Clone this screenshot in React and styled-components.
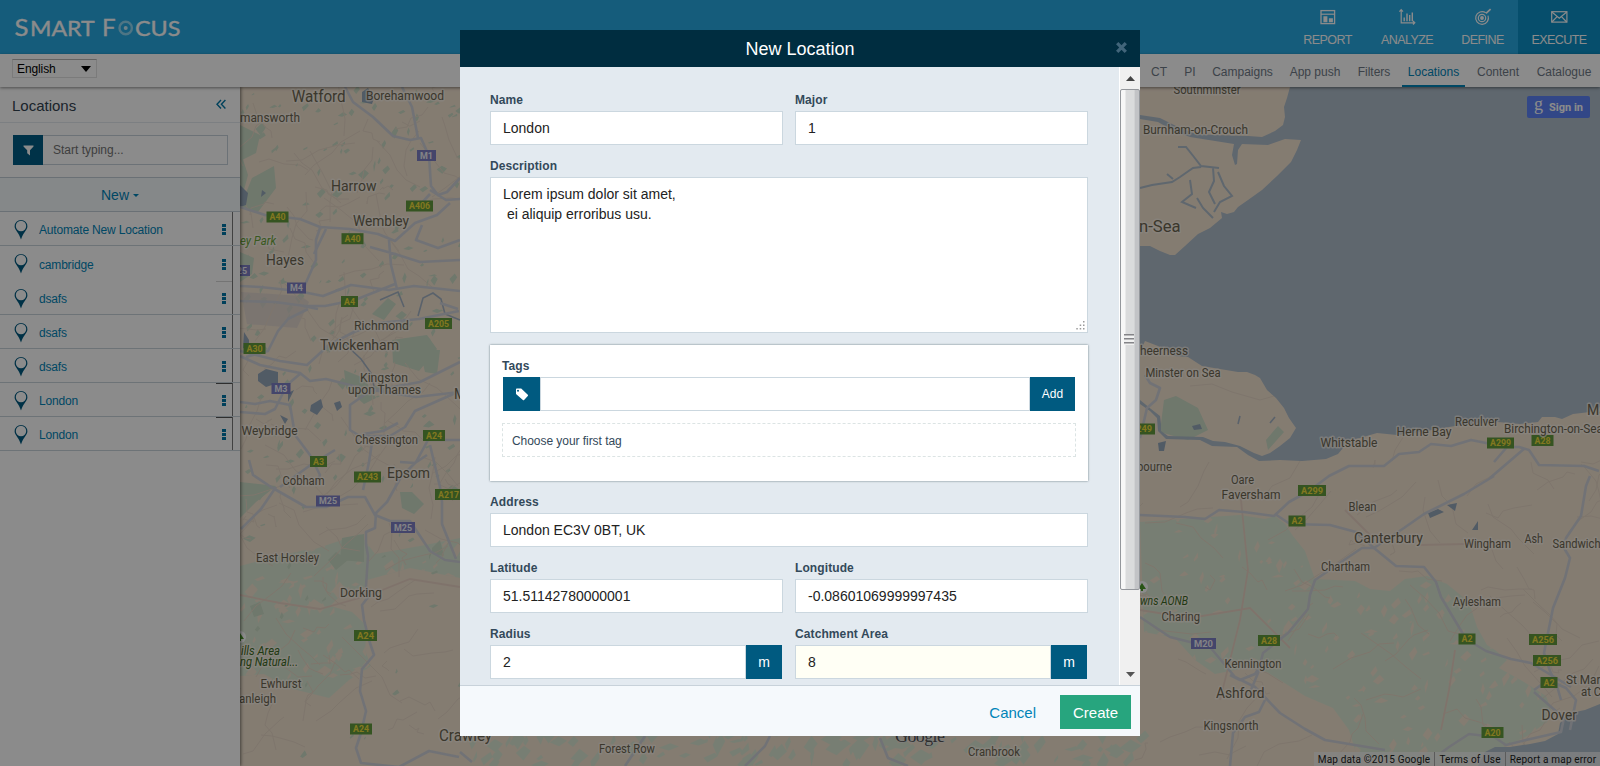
import React from "react";
import styled, { createGlobalStyle } from "styled-components";

const Global = createGlobalStyle`
  * { box-sizing: border-box; }
  html, body { margin: 0; padding: 0; overflow: hidden; }
  body { font-family: "Liberation Sans", Arial, sans-serif; font-size: 12px; color: #3b4a55; }
`;

const Page = styled.div`
  width: 1600px;
  height: 766px;
  display: flex;
  flex-direction: column;
  background: #fff;
  overflow: hidden;
`;

/* ---------- header ---------- */
const TopBar = styled.header`
  height: 54px;
  flex: none;
  display: flex;
  justify-content: space-between;
  background: #28a9e2;
`;
const Menu = styled.nav`
  display: flex;
`;
const MenuItem = styled.a`
  width: ${(p) => p.$w}px;
  display: flex;
  flex-direction: column;
  align-items: center;
  padding-top: 8px;
  background: ${(p) => (p.$active ? "#0b8fc6" : "transparent")};
  color: #fff;
  font-size: 12.5px;
  line-height: 16px;
  letter-spacing: -0.55px;
  svg { width: 20px; height: 18px; margin-bottom: 6px; }
`;
const SubBar = styled.div`
  height: 33px;
  flex: none;
  display: flex;
  justify-content: space-between;
  padding: 0 3px 0 12px;
  background: #fff;
  box-shadow: 0 1px 3px rgba(0, 0, 0, 0.45);
  position: relative;
  z-index: 2;
`;
const Language = styled.div`
  width: 85px;
  height: 19px;
  margin-top: 5px;
  padding: 0 5px 0 4px;
  display: flex;
  align-items: center;
  justify-content: space-between;
  border: 1px solid #e2e2e2;
  border-top: 1px solid #b4b4b4;
  color: #000;
  letter-spacing: -0.1px;
`;
const SubNav = styled.nav`
  display: flex;
  gap: 6px;
`;
const SubItem = styled.a`
  width: ${(p) => p.$w}px;
  text-align: center;
  line-height: 36px;
  white-space: nowrap;
  height: 33px;
  color: ${(p) => (p.$active ? "#0084b8" : "#6f7a86")};
  border-bottom: ${(p) => (p.$active ? "2px solid #0084b8" : "none")};
`;

/* ---------- sidebar ---------- */
const Main = styled.div`
  flex: 1;
  display: flex;
  min-height: 0;
`;
const Sidebar = styled.aside`
  width: 240px;
  flex: none;
  background: #fff;
  box-shadow: 1px 0 3px rgba(0, 0, 0, 0.5);
  position: relative;
  z-index: 1;
`;
const SideHead = styled.div`
  height: 36px;
  padding: 1px 14px 0 12px;
  display: flex;
  align-items: center;
  justify-content: space-between;
  border-bottom: 1px solid #e3e9ee;
  font-size: 15px;
  color: #33424f;
  svg { margin-top: -2px; }
`;
const SearchRow = styled.div`
  height: 55px;
  padding: 12px 12px 0 13px;
  display: flex;
  border-bottom: 1px solid #c3ced6;
`;
const SearchIcon = styled.div`
  width: 30px;
  height: 30px;
  display: flex;
  align-items: center;
  justify-content: center;
  background: #005c84;
`;
const SearchBox = styled.div`
  flex: 1;
  height: 30px;
  padding-left: 10px;
  line-height: 28px;
  border: 1px solid #c6d2da;
  border-left: 0;
  color: #737373;
`;
const NewRow = styled.div`
  height: 34px;
  display: flex;
  gap: 4px;
  align-items: center;
  justify-content: center;
  border-bottom: 1px solid #c3ced6;
  background: #f5f9fc;
  font-size: 14px;
  color: #0084b8;
  svg { margin-top: 2px; }
`;
const List = styled.div`
  width: 100%;
  background: linear-gradient(#777, #777) 232px 0 / 1px 100% no-repeat;
`;
const Item = styled.div`
  height: ${(p) => (p.$plain ? 35 : 34)}px;
  display: flex;
  align-items: center;
  padding: 2px 14px 0 14px;
  border-bottom: 1px solid ${(p) => (p.$plain ? "transparent" : "#c9d4db")};
  background: linear-gradient(${(p) => p.$tick || "transparent"}, ${(p) => p.$tick || "transparent"}) 216px 0 / 16px 1px
    no-repeat;
  color: #0084b8;
`;
const ItemName = styled.span`
  flex: 1;
  padding: 1px 0 0 11px;
  letter-spacing: -0.18px;
`;
const Dots = styled.i`
  width: 4px;
  height: 11px;
  background: repeating-linear-gradient(#0076a8 0 3px, transparent 3px 4px);
`;

/* ---------- map ---------- */
const MapArea = styled.div`
  flex: 1;
  position: relative;
  overflow: hidden;
`;
const MapSvg = styled.svg`
  display: block;
  font-family: Roboto, sans-serif;
`;
const SignIn = styled.div`
  position: absolute;
  right: 10px;
  top: 9px;
  width: 63px;
  height: 22px;
  display: flex;
  align-items: center;
  justify-content: center;
  gap: 6px;
  border-radius: 2px;
  background: #5c83f7;
  color: #fff;
  font: 700 11px Roboto, sans-serif;
`;
const SignInMark = styled.span`
  font: 18px/14px "Liberation Serif", serif;
  margin-top: -6px;
`;
const Credits = styled.div`
  position: absolute;
  right: 0;
  bottom: 0;
  height: 14px;
  display: flex;
  background: rgba(245, 245, 245, 0.72);
  font: 10px/15px Roboto, sans-serif;
  letter-spacing: 0.17px;
  color: #222;
  white-space: nowrap;
`;
const Credit = styled.span`
  width: ${(p) => p.$w}px;
  text-align: center;
  border-left: ${(p) => (p.$line ? "1px solid #a8a8a8" : "0")};
`;

/* ---------- modal ---------- */
const Backdrop = styled.div`
  position: fixed;
  inset: 0;
  z-index: 10;
  display: flex;
  justify-content: center;
  align-items: flex-start;
  padding-top: 30px;
  background: rgba(0, 0, 0, 0.455);
`;
const Modal = styled.section`
  width: 680px;
  height: 706px;
  display: flex;
  flex-direction: column;
  background: #e3eaf0;
`;
const ModalHead = styled.div`
  height: 37px;
  flex: none;
  display: grid;
  grid-template-columns: 1fr auto 1fr;
  align-items: center;
  padding-right: 13px;
  padding-left: 13px;
  background: #002d40;
  color: #fff;
`;
const ModalTitle = styled.h1`
  grid-column: 2;
  margin: 0;
  font-size: 18px;
  font-weight: 400;
  line-height: 38px;
`;
const CloseSlot = styled.span`
  justify-self: end;
  height: 11px;
  margin-top: -3px;
  display: flex;
`;
const ModalBody = styled.div`
  flex: 1;
  min-height: 0;
  display: flex;
`;
const Form = styled.div`
  flex: 1;
  padding: 24px 31px 0 30px;
  display: flex;
  flex-direction: column;
  gap: 12px;
  overflow: hidden;
`;
const Columns = styled.div`
  display: grid;
  grid-template-columns: 1fr 1fr;
  gap: 12px;
`;
const Field = styled.div`
  display: flex;
  flex-direction: column;
`;
const Label = styled.label`
  height: 20px;
  line-height: ${(p) => p.$lh || 18}px;
  font-weight: 700;
  color: #33495a;
  letter-spacing: 0.1px;
`;
const Box = styled.div`
  flex: ${(p) => (p.$h ? "none" : "1 1 auto")};
  height: ${(p) => p.$h || 34}px;
  min-height: 34px;
  padding: ${(p) => (p.$h ? "6px 12px" : "0 12px")};
  line-height: ${(p) => (p.$h ? 20 : 32)}px;
  border: 1px solid #cbd7df;
  background: ${(p) => p.$bg || "#fff"};
  color: #222;
  font-size: 14px;
  white-space: pre;
  position: relative;
`;
const Grip = styled.svg`
  position: absolute;
  right: 2px;
  bottom: 2px;
`;
const Group = styled.div`
  display: flex;
  padding-right: ${(p) => p.$inset || 0}px;
`;
const Addon = styled.div`
  width: ${(p) => p.$w}px;
  height: 34px;
  flex: none;
  display: flex;
  align-items: center;
  justify-content: center;
  background: #005a80;
  color: #fff;
  font-size: ${(p) => p.$size || 14}px;
`;
const TagCard = styled.div`
  height: 136px;
  flex: none;
  padding: 12px 12px 0 12px;
  background: #fff;
  box-shadow: 0 0 2px rgba(60, 80, 90, 0.75);
`;
const TagRow = styled.div`
  display: flex;
  margin: 0 1px;
`;
const TagHint = styled.div`
  height: 34px;
  margin-top: 12px;
  padding-left: 9px;
  line-height: 34px;
  border: 1px dashed #dce4e4;
  color: #33495a;
  letter-spacing: -0.05px;
`;
const Scroll = styled.div`
  width: 21px;
  flex: none;
  display: flex;
  flex-direction: column;
  align-items: center;
  border-left: 1px solid #fff;
  background: #f0f0f0;
`;
const Arrow = styled.div`
  height: 22px;
  flex: none;
  display: flex;
  align-items: center;
`;
const Thumb = styled.div`
  width: 20px;
  height: 501px;
  flex: none;
  display: flex;
  align-items: center;
  justify-content: center;
  border: 1px solid #94979c;
  border-radius: 2px;
  background: linear-gradient(90deg, #f7f7f7 0 20%, #dadbdc 30% 72%, #c2c3c6 80% 100%);
`;
const ThumbLines = styled.i`
  width: 10px;
  height: 11px;
  margin-right: 2px;
  background: repeating-linear-gradient(#848488 0 1px, #b9b9bb 1px 2px, #f0f0f0 2px 4px);
`;
const ScrollRest = styled.div`
  flex: 1;
`;
const ModalFoot = styled.div`
  height: 51px;
  flex: none;
  display: flex;
  align-items: flex-start;
  justify-content: flex-end;
  gap: 24px;
  padding: 9px 9px 0 0;
  border-top: 1px solid #c8d2da;
  background: #f5f9fc;
  font-size: 15px;
  line-height: 35px;
`;
const Cancel = styled.a`
  color: #0084b8;
`;
const Create = styled.div`
  width: 71px;
  height: 34px;
  text-align: center;
  background: #27a57e;
  color: #fff;
`;

/* ---------- icons ---------- */
const Logo = () => (
  <svg width="200" height="54" fontFamily="Lato, sans-serif" fill="#fff" stroke="#fff" strokeWidth=".35">
    <text x="14.5" y="35.5" fontSize="23.5" textLength="14" lengthAdjust="spacingAndGlyphs">S</text>
    <text x="30" y="35.5" fontSize="21" textLength="64.5" lengthAdjust="spacingAndGlyphs">MART</text>
    <text x="102" y="35.5" fontSize="24">F</text>
    <text x="135" y="35.5" fontSize="21" textLength="45.5" lengthAdjust="spacingAndGlyphs">CUS</text>
    <circle cx="125.7" cy="28" r="6.2" fill="none" stroke="#8fd6f2" strokeWidth="2.4" />
    <circle cx="125.7" cy="28" r="2" fill="#c9ecf9" stroke="none" />
  </svg>
);
const ReportIcon = () => (
  <svg viewBox="0 0 20 18" fill="none" stroke="#fff" strokeWidth="1.3">
    <rect x="3" y="2.6" width="13.6" height="13" />
    <path d="M3 6.2h13.6" strokeWidth="1.2" />
    <path d="M5.4 8.2h4v6h-4zM10.9 10.3h4v3.9h-4z" fill="#fff" stroke="none" />
  </svg>
);
const AnalyzeIcon = () => (
  <svg viewBox="0 0 20 18" fill="none" stroke="#fff" strokeWidth="1.2">
    <path d="M4.2 1.5v13.3h13.5M2.4 3.6l1.8-2 1.8 2M16 13l1.8 1.8L16 16.5" />
    <path d="M7.2 13.2V9.5M10 13.2V5.5M12.7 13.2V7M15.3 13.2V4.5" strokeWidth="1.4" />
  </svg>
);
const DefineIcon = () => (
  <svg viewBox="0 0 20 18" fill="none" stroke="#fff" strokeWidth="1.2">
    <path d="M12.8 4.8A6.4 6.4 0 1 0 15 7.6" />
    <circle cx="9" cy="10" r="3.7" />
    <circle cx="9" cy="10" r="1.3" fill="#fff" />
    <path d="M13 5.4l4.6-4.2" strokeWidth="1.7" />
  </svg>
);
const ExecuteIcon = () => (
  <svg viewBox="0 0 20 18" fill="none" stroke="#fff" strokeWidth="1.2">
    <rect x="2.7" y="3.7" width="15.2" height="10.4" />
    <path d="M2.9 4l7.4 6.2L17.7 4M2.9 14l5.2-5.4M17.7 14l-5.2-5.4" />
  </svg>
);
const Pin = () => (
  <svg width="14" height="22" viewBox="0 0 14 22">
    <path d="M7 1a6.3 6.3 0 0 0-6.4 6.2c0 3.9 4.3 6.300 6.400 13.300 2.100-7 6.400-9.400 6.400-13.300A6.300 6.300 0 0 0 7 1z" fill="#005a80" />
    <circle cx="7" cy="7" r="5.2" fill="#fff" />
  </svg>
);
const Collapse = () => (
  <svg width="10" height="11" viewBox="0 0 10 11" fill="none" stroke="#0078a8" strokeWidth="1.4">
    <path d="M5 1L1 5.3l4 4.2M9.4 1l-4 4.3 4 4.2" />
  </svg>
);
const Funnel = () => (
  <svg width="11" height="11" viewBox="0 0 11 11">
    <path d="M.5.5h10v1L7 5.3v5.2L4.2 8.3v-3L.5 1.5z" fill="#fff" />
  </svg>
);
const TagIcon = () => (
  <svg width="14" height="13" viewBox="0 0 14 13">
    <path d="M1 1.4Q1 .6 1.8.6h4.4l6.600 6.200q.6.6 0 1.200l-3.700 4q-.6.6-1.200 0L1 5.900zM3 1.800a1 1 0 1 0 .02 2A1 1 0 0 0 3 1.800z" fill="#fff" fillRule="evenodd" />
  </svg>
);
const Close = () => (
  <svg width="11" height="11" viewBox="0 0 11 11" stroke="#41657a" strokeWidth="3.3">
    <path d="M1.2 1.2l8.6 8.6M9.8 1.2L1.2 9.8" />
  </svg>
);
const Tri = ({ w = 9, h = 5, up, fill }) => (
  <svg width={w} height={h} viewBox="0 0 10 6" preserveAspectRatio="none">
    <path d={up ? "M0 6L5 0l5 6z" : "M0 0h10L5 6z"} fill={fill} />
  </svg>
);

/* ---------- map data ---------- */
const LAND = "#f2e3d0";
const WATER = "#aebdca";
const PARK = "#cbdcc6";
const WOOD = "#dbe8d3";
const ROAD = "#cfd2d8";

const towns = [
  ["Watford", 291.7, 102, 54, 16], ["Borehamwood", 366, 100, 78], ["mansworth", 240, 122, 60],
  ["Harrow", 331, 191, 45.5, 15], ["Wembley", 353, 226, 56, 15], ["Hayes", 266, 265, 38, 15],
  ["Richmond", 354, 330, 55], ["Twickenham", 320, 350, 79, 15], ["Kingston", 360, 381.5, 48],
  ["upon Thames", 348, 393.5, 73], ["Weybridge", 241.5, 434.5, 56], ["Chessington", 355, 443.5, 63],
  ["M", 454, 399, 12, 14], ["Cobham", 282.5, 485, 42], ["Epsom", 387, 477.5, 43, 15.5],
  ["East Horsley", 256, 562, 63], ["Dorking", 340, 597, 42, 13], ["Ewhurst", 260.5, 688, 41],
  ["anleigh", 239, 703, 37], ["Crawley", 439, 740.5, 53, 16], ["Forest Row", 599, 753, 56],
  ["Cranbrook", 968, 756, 52], ["Southminster", 1173.5, 94, 67], ["Burnham-on-Crouch", 1143, 134, 105],
  ["n-Sea", 1139, 232, 41.5, 16], ["heerness", 1140, 355, 48], ["Minster on Sea", 1145.5, 377, 75],
  ["bourne", 1137, 471, 35], ["Oare", 1231, 484, 23], ["Whitstable", 1320.5, 447, 57],
  ["Herne Bay", 1396.5, 435.5, 55], ["Reculver", 1455, 426, 43], ["Birchington-on-Sea", 1504, 432.8, 99],
  ["Ma", 1587, 415, 20, 15], ["Faversham", 1221.5, 499, 59], ["Blean", 1348.5, 510.5, 28],
  ["Canterbury", 1354, 542.5, 69, 15], ["Wingham", 1464, 547.5, 47], ["Ash", 1524.5, 542.7, 18.5],
  ["Sandwich", 1552.5, 548, 48], ["Chartham", 1321, 570.5, 49], ["Aylesham", 1453, 605.5, 48],
  ["Charing", 1161.5, 621, 38.5], ["Kennington", 1224.5, 668, 57], ["Ashford", 1216, 697.8, 48.5, 15.5],
  ["Kingsnorth", 1203.5, 730, 55], ["Dover", 1541.5, 719.5, 35.5, 15.5], ["St Marg", 1566, 684, 41],
  ["at Cl", 1581, 695.5, 23],
];
const natural = [
  ["ey Park", 240, 244.7, 36, "#6aa338"], ["ills Area", 241, 655, 39, "#3c6a24"],
  ["ng Natural...", 240, 666.3, 58, "#3c6a24"], ["wns AONB", 1140, 604.5, 48, "#3c6a24"],
];
const shields = [
  ["M1", 426.5, 155.5, 19], ["A406", 419.5, 206, 27], ["A40", 277.5, 217, 22], ["A40", 352.5, 238.7, 22],
  ["M25", 238, 270.5, 24], ["M4", 296.5, 288, 19], ["A4", 349.5, 301.5, 17], ["A205", 438.5, 323.5, 27],
  ["A30", 254.5, 348.5, 22], ["M3", 281, 388.5, 19], ["A24", 434, 435.5, 22], ["A3", 318.5, 461.5, 17],
  ["A243", 367.5, 477, 27], ["M25", 328, 501, 24], ["A217", 448.5, 494.5, 27], ["M25", 403, 527.5, 24],
  ["A24", 365.5, 635.5, 23], ["A24", 361, 729, 22], ["A249", 1141, 429, 28], ["A299", 1500.5, 443, 27],
  ["A28", 1542.5, 440.5, 22], ["A299", 1312, 490.5, 28], ["A2", 1297, 521, 17], ["M20", 1203.5, 643.5, 25],
  ["A28", 1269, 640.5, 22], ["A2", 1467, 639, 17], ["A256", 1543, 639.5, 28], ["A256", 1547, 660.5, 28],
  ["A2", 1549, 682.5, 17], ["A20", 1492.5, 732.5, 22],
];
const roads = [
  "M345 87l8 15 20 15 20 19 17 4 11-2 8 18 2 30 7 9 9-3 13-14",
  "M402 87l10 20 6 31M240 207l25 8 35 4 20 8 30 2 28 5 17 7 20-18 22-8 13-12M418 207l12-13 M320 228l-4 12 0 20-12 27",
  "M240 286l20 1 38 4 25 5 28-11 38 5 25-4 46 5M389 240l2 25 6 24M370 247l25 7 25 8 40-2M240 301l35 1 30 4 20 0 30-6 40-16",
  "M459 311l-40 8-40 4-25 9-25 13-22 20-27-4-40-10M308 309l-20 10-10 12-10 20-22 6",
  "M240 356l20 9 40 8 10 8 16-2 40 10 50 8 44-5M301 373l-14 12-12 24-10 5-25-2",
  "M240 402l15 2 15-3 20 4 5 30 15 20 10 20-5 10M460 362l-40 20-50 9-20 14 0 25 10 6 30 0 15-9 10-16 45-20",
  "M398 423l-15 8-20 3M373 436l-4 26-6 28M249 460l4 15 18 12 35 20 20 0 22-10 17 0 10 18 15 6 20 0 20 30 15 9 15 2",
  "M276 487l-15 22-20 20M280 487l32-23 23-14M375 514l12-12 14-25 15-15 12-22 32 0M400 462l15 1 12-8M430 445l10 42 2 15 0 22 14 35",
  "M376 513l-1 15-9 4 0 12 2 12-2 30 3 10-7 9 2 15 5 20 5 15-12 14-2 22 6 20-5 22-5 15 5 15 38 4 30-16 30 6",
  "M318 309l-15-3M440 303l18 6M422 225l-6 15 22 8 22-8M326 229l-12 25M430 190l16 10 14-1",
  "M1140 515l45 2 20 2 14-9 25 2 30 4 15-14 20-11 20-15 20-10 35 0 15-12 20-2 12-8 20 2 20-6 25 5M1275 514l15 10 40 1 26 7 18 16 22 18 28 1 12 15 5 15 25 42 20 12 25 8 20 4 40 24",
  "M1374 548l-12 0-15 10-32 22-5 15-2 14-20 24-15 12-10 8-5 20-7 17M1374 548l30-20 20-14 40-20 30-18M1494 462l13-15 12 0 10 3 10 15 45 1 15 5M1525 448l-35 30M1490 442l20 1",
  "M1590 476l-4 10-5 30-15 22-2 10 6 10-5 20-12 30-6 30-3 15 6 18 7 15 4 14M1534 690l14-10 18 8 10 12-2 10-4 20M1534 692l16 14 14 12-3 14-35 8-20 5-12-8-25-3-20 13-8 6",
  "M1140 617l30 20 40 10 25 30 20 10 25 26 25 16 20 11 60 10M1230 675l10 5 15-6 8-12M1265 700l-6 12-14 5-12 16-3 33",
  "M1145 375l5 8 10 5-4 12-9 8-7 30M460 752l12 10M745 766l20-20 5-10M880 738l8 20 20 8M625 766l20-30",
];

const rand = (seed) => {
  let s = seed;
  return () => {
    s = (s * 16807) % 2147483647;
    return s / 2147483647;
  };
};
const flecks = (seed, n, x0, y0, w, h, size) => {
  const r = rand(seed);
  let d = "";
  for (let i = 0; i < n; i++) {
    const x = x0 + r() * w;
    const y = y0 + r() * h;
    const a = size * (0.3 + r());
    const b = size * (0.3 + r());
    d += `M${x.toFixed(1)} ${y.toFixed(1)}l${a.toFixed(1)} ${(-b).toFixed(1)} ${(a * r()).toFixed(1)} ${(b * 0.7).toFixed(1)} ${(-a * 0.9).toFixed(1)} ${(b * (0.4 + r())).toFixed(1)}z`;
  }
  return d;
};
const lanes = (seed, n, x0, y0, w, h) => {
  const r = rand(seed);
  let d = "";
  for (let i = 0; i < n; i++) {
    d += `M${(x0 + r() * w).toFixed(0)} ${(y0 + r() * h).toFixed(0)}`;
    const ax = r() * 30 - 15;
    const ay = r() * 30 - 15;
    for (let k = 0; k < 4; k++) d += `l${(ax + r() * 14 - 7).toFixed(0)} ${(ay + r() * 14 - 7).toFixed(0)}`;
  }
  return d;
};

const KENT =
  "M1140 522l70-5 30-2 25 4 10-3 10 8 8 12 12 15 7 20 3 8 40 2 15 8 20 2 15-12 22-3 20 8 22 18 8 25 10 18 8 5 12 10-8 8 25 14 22 14 5 14-4 12-20 14-28 14-28 8-18 8-50-4-46-6-8-26-16-22-28-12-22-14-16-10-22-4-30 6-20-14-20-22-31-6z";
const SURREY =
  "M240 566l30-8 35-8 40 12 20-4 2 28-25 8-12 12 22 6 15 14-2 24 6 16-22 14-20 18-40-10-25-14-24 2z M240 566l60-12 60-20 15 20 45-8 40-8v40l-50-10-50 14-40 8-80 2z";
const SEA =
  "M1290 87L1287 98 1284 107 1285 117 1283 125 1275 131 1262 137 1248 136 1215 135 1196 134 1176 126 1160 118 1140 115V119L1158 122 1172 130 1190 137 1234 144 1232 155 1235 165 1237 164 1238 150 1242 144 1268 145 1285 139 1301 140 1297 150 1291 162 1277 176 1262 190 1248 200 1238 207 1234 212 1227 214 1221 212 1222 218 1210 228 1198 234 1185 246 1175 255 1170 255 1160 251 1150 246 1140 246V352L1145 341 1158 346 1175 356 1188 357 1202 366 1220 369 1238 372 1247 372 1255 375 1260 378 1267 390 1276 398 1284 408 1289 418 1296 428 1290 438 1280 446 1270 453 1262 456 1254 453 1240 446 1225 442 1213 441 1203 437 1168 436 1161 431V424L1160 416 1151 409 1140 400V404L1150 411 1157 418 1158 431 1166 439 1200 440 1212 446 1237 447 1248 455 1259 461 1280 460 1302 461 1326 459 1338 454 1343 448 1343 442 1360 438 1377 433 1397 435 1420 432 1455 426 1480 423 1498 422 1520 424 1538 422 1542 417 1555 417 1562 419 1573 414 1590 412 1600 408V87z";

const MapDrawing = () => (
  <MapSvg width="1360" height="679" viewBox="240 87 1360 679">
    <defs>
      <clipPath id="kent"><path d={KENT} /></clipPath>
      <clipPath id="surrey"><path d={SURREY} /></clipPath>
    </defs>
    <rect x="240" y="87" width="1360" height="679" fill={LAND} />
    <path d={KENT} fill={WOOD} />
    <path d={SURREY} fill={WOOD} />
    <path d={flecks(71, 230, 1140, 515, 420, 250, 6)} fill={LAND} clipPath="url(#kent)" />
    <path d={flecks(19, 130, 240, 540, 220, 140, 7)} fill={LAND} clipPath="url(#surrey)" />
    <path d={flecks(33, 190, 240, 90, 218, 390, 5)} fill={PARK} />
    <path d={flecks(8, 30, 240, 480, 218, 280, 5)} fill={PARK} />
    <path d={flecks(23, 120, 460, 732, 680, 34, 9)} fill={WOOD} />
    <path
      d="M240 125l20 10-4 18-16 8zM252 178l22-12 2 22-18 24-18-4zM240 150l8 25-8 30zM240 252l14 6-2 16-12 8zM372 314l16-16 8 6-12 16zM392 340l35-5 10 14-18 22-26-8zM420 350l20 0-3 24-12-2zM344 370l20 8 12 20-12 6-18-16zM342 538l22-4 0 28-24-2zM328 560l8-8 12 8-12 10zM240 482l36 4-20 16-16 16zM250 606l10-4 4 12-10 3zM432 548l8-8 4 16-12-2zM400 492l12 0 12 12-10 10-12-6zM1164 400l12-4 22 12 10 22 -20 10-28-8zM1266 440l12-14 6 6-16 18z"
      fill={PARK}
    />
    <path d="M241 292l60 4 8 6-12 26-50-4z" fill="#dcd2cd" opacity=".7" />
    <path d={lanes(5, 130, 240, 87, 220, 679)} fill="none" stroke="#e8d8c7" />
    <path d={lanes(77, 75, 1140, 460, 460, 300)} fill="none" stroke="#e8d8c7" />
    <path d="M1240 490l8 80-8 50-20 80M1140 610l50 8 60-10 40 40M240 595l40 8 40 6 50-14 40-16 50 8M1455 650l-6 40-8 40M1345 510l30 30M1420 545l90-2" fill="none" stroke="#ead3c5" strokeWidth="1.8" />
    <path d="M1190 386l22-2 20 8 28 8 14-4" fill="none" stroke="#e8d8c7" />

    <path d={SEA} fill={WATER} />
    <path d="M1600 704L1585 710 1570 713 1560 723 1558 734 1545 741 1530 744 1510 747 1495 747 1485 752 1478 766H1600z" fill={WATER} />
    <path
      d="M1140 188l12-3 20-3 8-5 13-9 8-1M1178 147l8 0 8 10 7 9 18 2M1213 168l1 13-5 11 6 12M1190 180l2 14-10 8 14 6M1218 172l6 14 8 10-12 6-6 10M1197 198l6 10 10 10M1167 174l6 5"
      fill="none" stroke={WATER} strokeWidth="2"
    />
    <path
      d="M362 92l6-4 6 10-2 6-10-2zM258 374l8-5 12 3 0 11-12 4-8-6zM311 405l10-6 2 8-6 8-7-4zM334 403l6-2 2 6-5 4zM240 185l8 8-2 12-6 2zM262 190l4 3-5 4zM288 393l6-3-6 12zM280 415l8 4-3 5zM244 332l5 8 0 10-6-2zM1192 426l8-2 2 5-8 1zM1158 443l8-2-2 10-5 0zM1428 513l10-4 6 3-14 6zM1447 505l10-2-2 8zM1474 527l4-6 0 9-6 0z"
      fill="#95a7ba"
    />
    <path
      d="M418 316l5-18 10-5 8 6 4 15 15 6M380 300l18-8 6 15M345 344l16 15 10 14 4 18M1270 423l5-6M1240 416l-2 8"
      fill="none" stroke="#a6b4c4" strokeWidth="1.6"
    />
    <g fill="none" stroke={ROAD} strokeWidth="2.6" strokeLinejoin="round">
      {roads.map((d) => <path key={d} d={d} />)}
    </g>
    {[[240, 637], [1142, 587]].map(([x, y]) => (
      <g key={x}>
        <circle cx={x} cy={y} r="6" fill="#fff" />
        <path d={`M${x} ${y - 4}l4 6h-3v2h-2v-2h-3z`} fill="#4c9a2a" />
      </g>
    ))}
    {shields.map(([t, x, y, w], i) => {
      const m = t[0] === "M";
      return (
        <g key={i}>
          <rect x={x - w / 2} y={y - 5.5} width={w} height="11" fill={m ? "#7d7fc4" : "#619b3d"} />
          <text
            x={x} y={y + 3.3} fontSize="9.2" fontWeight="700" textAnchor="middle"
            textLength={w - 6} lengthAdjust="spacingAndGlyphs" fill={m ? "#f0f0f5" : "#efdc3c"}
          >
            {t}
          </text>
        </g>
      );
    })}
    <g fill="#6d6652" stroke="#fbf4ea" strokeOpacity=".7" strokeWidth="3" paintOrder="stroke" strokeLinejoin="round">
      {towns.map(([t, x, y, w, s = 12]) => (
        <text key={t} x={x} y={y} fontSize={s} textLength={w} lengthAdjust="spacingAndGlyphs">{t}</text>
      ))}
      {natural.map(([t, x, y, w, c]) => (
        <text key={t} x={x} y={y} fontSize="12" fontStyle="italic" fill={c} textLength={w} lengthAdjust="spacingAndGlyphs">{t}</text>
      ))}
    </g>
    <text x="895" y="742" fontFamily="Liberation Serif, serif" fontSize="18" fill="#555" stroke="#eee" strokeWidth="1" paintOrder="stroke" textLength="50">
      Google
    </text>
  </MapSvg>
);

/* ---------- content ---------- */
const sections = [
  ["REPORT", 79, ReportIcon], ["ANALYZE", 80, AnalyzeIcon], ["DEFINE", 71, DefineIcon], ["EXECUTE", 82, ExecuteIcon],
];
const pages = [
  ["CT", 28], ["PI", 22], ["Campaigns", 71], ["App push", 62], ["Filters", 44], ["Locations", 63], ["Content", 54], ["Catalogue", 66],
];
const locations = [
  { name: "Automate New Location" },
  { name: "cambridge", plain: true },
  { name: "dsafs", tick: "#d5d5d5" },
  { name: "dsafs" },
  { name: "dsafs" },
  { name: "London", tick: "#555" },
  { name: "London", tick: "#555" },
];

const TextField = ({ label, value, unit, bg }) => (
  <Field>
    <Label $lh={19}>{label}</Label>
    <Group $inset={unit ? 1 : 0}>
      <Box $bg={bg}>{value}</Box>
      {unit && <Addon $w={36}>{unit}</Addon>}
    </Group>
  </Field>
);

export default function App() {
  return (
    <>
      <Global />
      <Page>
        <TopBar>
          <Logo />
          <Menu>
            {sections.map(([name, w, Icon]) => (
              <MenuItem key={name} $w={w} $active={name === "EXECUTE"}>
                <Icon />
                {name}
              </MenuItem>
            ))}
          </Menu>
        </TopBar>
        <SubBar>
          <Language>English<Tri w={10} h={6} fill="#000" /></Language>
          <SubNav>
            {pages.map(([name, w]) => (
              <SubItem key={name} $w={w} $active={name === "Locations"}>{name}</SubItem>
            ))}
          </SubNav>
        </SubBar>
        <Main>
          <Sidebar>
            <SideHead>Locations<Collapse /></SideHead>
            <SearchRow>
              <SearchIcon><Funnel /></SearchIcon>
              <SearchBox>Start typing...</SearchBox>
            </SearchRow>
            <NewRow>New<Tri w={6} h={3} fill="#0084b8" /></NewRow>
            <List>
              {locations.map((l, i) => (
                <Item key={i} $plain={l.plain} $tick={l.tick}>
                  <Pin />
                  <ItemName>{l.name}</ItemName>
                  <Dots />
                </Item>
              ))}
            </List>
          </Sidebar>
          <MapArea>
            <MapDrawing />
            <SignIn><SignInMark>g</SignInMark>Sign in</SignIn>
            <Credits>
              <Credit $w={120}>Map data ©2015 Google</Credit>
              <Credit $w={71} $line>Terms of Use</Credit>
              <Credit $w={95} $line>Report a map error</Credit>
            </Credits>
          </MapArea>
        </Main>
      </Page>
      <Backdrop>
        <Modal>
          <ModalHead>
            <ModalTitle>New Location</ModalTitle>
            <CloseSlot><Close /></CloseSlot>
          </ModalHead>
          <ModalBody>
            <Form>
              <Columns>
                <TextField label="Name" value="London" />
                <TextField label="Major" value="1" />
              </Columns>
              <Field>
                <Label $lh={19}>Description</Label>
                <Box $h={156}>
                  {"Lorem ipsum dolor sit amet,\n ei aliquip erroribus usu."}
                  <Grip width="9" height="9" fill="#9a9a9a">
                    <path d="M7 0h1.5v1.5H7zM7 3.5h1.5V5H7zM7 7h1.5v1.5H7zM3.7 3.5h1.5V5H3.7zM3.7 7h1.5v1.5H3.7zM.3 7h1.5v1.5H.3z" />
                  </Grip>
                </Box>
              </Field>
              <TagCard>
                <Label as="div">Tags</Label>
                <TagRow>
                  <Addon $w={37}><TagIcon /></Addon>
                  <Box />
                  <Addon $w={45} $size={12}>Add</Addon>
                </TagRow>
                <TagHint>Choose your first tag</TagHint>
              </TagCard>
              <TextField label="Address" value="London EC3V 0BT, UK" />
              <Columns>
                <TextField label="Latitude" value="51.51142780000001" />
                <TextField label="Longitude" value="-0.08601069999997435" />
              </Columns>
              <Columns>
                <TextField label="Radius" value="2" unit="m" />
                <TextField label="Catchment Area" value="8" unit="m" bg="#fffff5" />
              </Columns>
            </Form>
            <Scroll>
              <Arrow><Tri up fill="#444" /></Arrow>
              <Thumb><ThumbLines /></Thumb>
              <ScrollRest />
              <Arrow><Tri fill="#555" /></Arrow>
            </Scroll>
          </ModalBody>
          <ModalFoot>
            <Cancel>Cancel</Cancel>
            <Create>Create</Create>
          </ModalFoot>
        </Modal>
      </Backdrop>
    </>
  );
}
